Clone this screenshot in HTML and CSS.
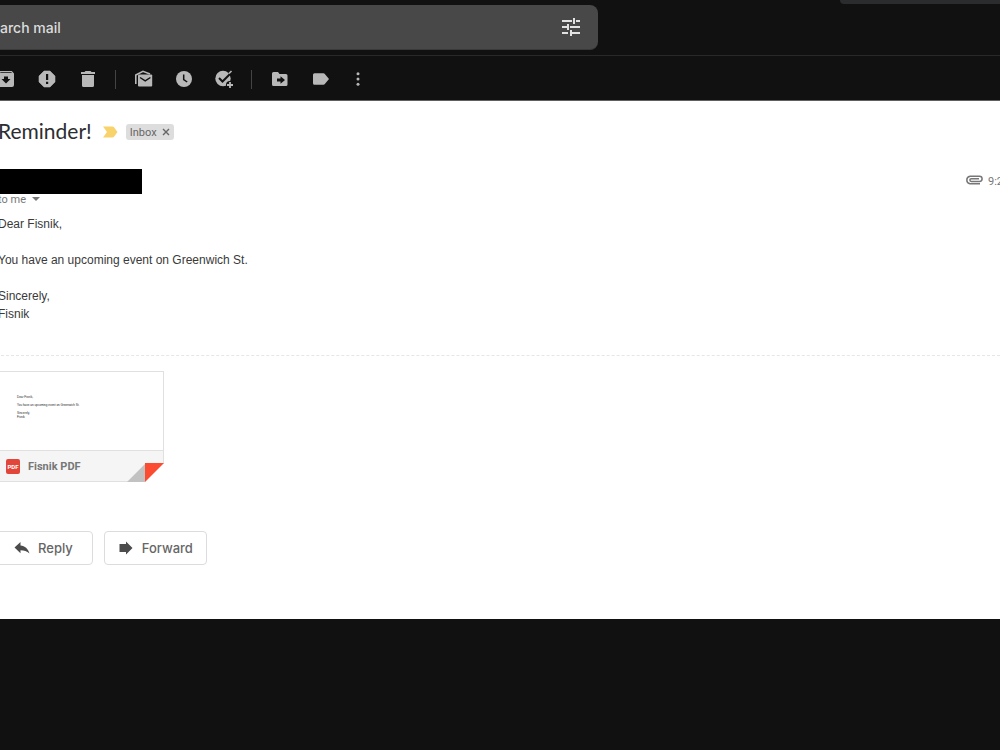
FILE: index.html
```html
<!DOCTYPE html>
<html lang="en">
<head>
<meta charset="utf-8">
<title>Reminder!</title>
<link rel="stylesheet" href="styles.css">
</head>
<body>
<div class="app">
  <header class="header">
    <form class="search">
      <input class="search-input" type="text" aria-label="Search mail" placeholder="arch mail">
      <button class="icon-button search-options" type="button" aria-label="Search options">
        <svg viewBox="0 0 20 20" fill="none" stroke="currentColor" stroke-width="2"><path d="M1 4h10M15 4h4M1 10h5M9 10h10M1 16h6M11 16h8M13 1v6M7 7v6M10 13v6"/></svg>
      </button>
    </form>
    <div class="panel-edge"></div>
  </header>

  <nav class="toolbar" aria-label="Message actions">
    <div class="group group-first">
      <button class="icon-button" type="button" aria-label="Archive"><svg viewBox="0 0 20 20"><path fill-rule="evenodd" d="M4.200 2h11.600l2.200 2.500V16a2 2 0 0 1-2 2H4a2 2 0 0 1-2-2V4.500zM4 4h12l-.7-.8H4.700zM8 7.500V10H5.500L10 14.500 14.500 10H12V7.500z"/></svg></button>
      <button class="icon-button" type="button" aria-label="Report spam"><svg viewBox="0 0 20 20"><path d="M7 2h6l5 5v6l-5 5H7l-5-5V7z" stroke="currentColor" stroke-width=".6" stroke-linejoin="round"/><path d="M9 5h2.200v6H9zM9 12.800h2.200V15H9z" fill="#111"/></svg></button>
      <button class="icon-button" type="button" aria-label="Delete"><svg viewBox="0 0 20 20"><path d="M7.500 2h5l1 1H17v2H3V3h3.500zM4 6h12v10.500a1.500 1.500 0 0 1-1.500 1.500h-9A1.500 1.500 0 0 1 4 16.500z"/></svg></button>
    </div>
    <span class="separator"></span>
    <div class="group">
      <button class="icon-button" type="button" aria-label="Mark as unread"><svg viewBox="0 0 20 20"><path d="M1.800 15V6L9 2.300 16 5" fill="none" stroke="currentColor" stroke-width="1.600"/><path d="M5 5.500h12.200a1 1 0 0 1 1 1v10a1 1 0 0 1-1 1H5a1 1 0 0 1-1-1v-10a1 1 0 0 1 1-1z"/><path d="M6 8.500l5.200 3.300 5.200-3.300" fill="none" stroke="#111" stroke-width="1.400"/></svg></button>
      <button class="icon-button" type="button" aria-label="Snooze"><svg viewBox="0 0 20 20"><circle cx="10" cy="10" r="8"/><path d="M9.700 5.500v5l3.500 2.500" fill="none" stroke="#111" stroke-width="1.500"/></svg></button>
      <button class="icon-button" type="button" aria-label="Add to tasks"><svg viewBox="0 0 20 20"><circle cx="9" cy="9.500" r="7.700"/><path d="M5 9l3.500 3.500L17.500 3.500" fill="none" stroke="#111" stroke-width="2"/><path d="M15 4.500l2.500-2.500" stroke="currentColor" stroke-width="1.600"/><circle cx="16" cy="16" r="4" fill="#111"/><path d="M16 13v6M13 16h6" stroke="currentColor" stroke-width="1.800"/></svg></button>
    </div>
    <span class="separator"></span>
    <div class="group">
      <button class="icon-button" type="button" aria-label="Move to"><svg viewBox="0 0 20 20"><path fill-rule="evenodd" d="M3.500 3H8l1.500 2h6.500a1.500 1.500 0 0 1 1.500 1.500v9a1.500 1.500 0 0 1-1.500 1.500H3.500A1.500 1.500 0 0 1 2 15.500v-11A1.500 1.500 0 0 1 3.500 3zM7 9.500v3h3.500v2.300L15 11l-4.500-3.800v2.300z"/></svg></button>
      <button class="icon-button" type="button" aria-label="Labels"><svg viewBox="0 0 20 20"><path d="M4.500 4.200h9c.6 0 1 .3 1.300.7L19 10l-4.200 5.100c-.3.400-.7.700-1.300.7h-9A1.500 1.500 0 0 1 3 14.300V5.700a1.500 1.500 0 0 1 1.500-1.500z"/></svg></button>
      <button class="icon-button icon-button-narrow" type="button" aria-label="More"><svg viewBox="0 0 16 20"><circle cx="8" cy="4.800" r="1.500"/><circle cx="8" cy="10" r="1.500"/><circle cx="8" cy="15.200" r="1.500"/></svg></button>
    </div>
  </nav>

  <main class="mail">
    <div class="subject-row">
      <h1 class="subject">Reminder!</h1>
      <svg class="important" viewBox="0 0 15 12"><path d="M0 .5h9.500a2 2 0 0 1 1.500.8L14.500 6 11 10.700a2 2 0 0 1-1.500.8H0L4 6z"/></svg>
      <span class="tag">Inbox <button class="tag-close" type="button" aria-label="Remove label"><svg viewBox="0 0 8 8"><path d="M1 1l6 6M7 1L1 7" stroke="currentColor" stroke-width="1.400"/></svg></button></span>
    </div>
    <div class="sender-row">
      <div class="sender"></div>
      <div class="meta">
        <svg class="clip" viewBox="0 0 18 14" fill="none" stroke="currentColor" stroke-width="1.500"><path d="M15 8.700H5A3.800 3.800 0 0 1 5 1.200h9.500a2.500 2.500 0 0 1 0 5.200H6.200a1.300 1.300 0 0 1 0-2.600H14"/></svg>
        <span>9:2</span>
      </div>
    </div>
    <button class="recipient" type="button">to me <span class="caret"></span></button>
    <div class="message">
      <p>Dear Fisnik,</p>
      <p>You have an upcoming event on Greenwich St.</p>
      <p>Sincerely,<br>Fisnik</p>
    </div>
    <hr class="divider">
    <a class="attachment" href="#">
      <span class="preview">
        <span>Dear Fisnik,</span>
        <span>You have an upcoming event on Greenwich St.</span>
        <span>Sincerely,<br>Fisnik</span>
      </span>
      <span class="file">
        <span class="pdf">PDF</span>
        <span class="file-name">Fisnik PDF</span>
      </span>
      <svg class="fold" viewBox="0 0 37 19"><path d="M37 0v19H18z" fill="#fff"/><path d="M0 19L18 1v18z" fill="#c2c2c2"/><path d="M18 0h19L18 19z" fill="#fb4b30"/></svg>
    </a>
    <div class="actions">
      <button class="action reply" type="button"><svg viewBox="0 0 16 14"><path d="M6.500 1v3.500C11 5 14 7.500 15.500 12.500 13 10 10 9.200 6.500 9.200v3L.5 6.500z"/></svg>Reply</button>
      <button class="action" type="button"><svg viewBox="0 0 16 14"><path d="M1.500 3H8V.500L14.500 7 8 13.500V11H1.500z"/></svg>Forward</button>
    </div>
  </main>
</div>
</body>
</html>
```
FILE: styles.css
```css
* { box-sizing: border-box; }

body {
  margin: 0;
  background: #111;
  color: #3c3c3c;
  font-family: Roboto, "Liberation Sans", sans-serif;
  overflow: hidden;
}

button { padding: 0; border: 0; background: none; color: inherit; font: inherit; }

.app { margin-left: -4px; }

.header {
  display: flex;
  justify-content: space-between;
  align-items: flex-start;
  padding-top: 5px;
  height: 56px;
  border-bottom: 1px solid #292929;
}

.search {
  display: flex;
  align-items: center;
  flex: 0 1 602px;
  height: 45px;
  padding: 0 17px 0 4px;
  border-radius: 0 8px 8px 0;
  background: #484848;
  border-bottom: 1px solid #3a3a3a;
}

.search-input {
  flex: 1;
  min-width: 0;
  padding: 0;
  border: 0;
  outline: 0;
  background: none;
  color: #ddd;
  font: 500 14px Inter, sans-serif;
}

.search-input::placeholder { color: #dcdcdc; opacity: 1; }
.search-options { color: #e2e2e2; }

.panel-edge {
  width: 160px;
  height: 4px;
  margin-top: -5px;
  border-radius: 0 0 0 4px;
  background: #2a2c2d;
}

.toolbar {
  display: flex;
  align-items: center;
  height: 45px;
  padding-top: 2px;
  border-bottom: 1px solid #606060;
  color: #b8b8b8;
}

.group { display: flex; gap: 20px; }
.group-first { gap: 21px; }
.icon-button { width: 20px; height: 20px; }
.icon-button-narrow { width: 16px; }
.icon-button svg { display: block; width: 100%; height: 100%; fill: currentColor; }
.search-options svg { fill: none; }
.separator { width: 1px; height: 19px; margin: 0 18px 0 17px; background: #444; }

.mail { padding: 20px 0 54px; background: #fff; }

.subject-row { display: flex; align-items: center; height: 22px; padding-left: 2px; }
.subject { margin: 0; padding-bottom: 2px; font: 400 21px/20px Lato, sans-serif; color: #2c2e30; }
.important { width: 15px; height: 12px; margin: 0 8px 0 11px; fill: #f8d26a; }

.tag {
  display: flex;
  align-items: center;
  gap: 5px;
  height: 16px;
  padding: 0 4px;
  border-radius: 3px;
  background: #ddd;
  color: #666;
  font-size: 11px;
}

.tag-close svg { display: block; width: 8px; height: 8px; }

.sender-row { display: flex; justify-content: space-between; margin-top: 26px; }
.sender { width: 146px; height: 25px; background: #000; }
.meta {
  display: flex;
  align-items: center;
  gap: 5px;
  height: 25px;
  margin-right: -3px;
  color: #777;
  font-size: 11px;
}
.clip { width: 18px; height: 14px; }

.recipient {
  display: flex;
  align-items: center;
  gap: 6px;
  height: 10px;
  padding-left: 2px;
  color: #777;
  font-size: 11px;
}
.caret { border: 4px solid transparent; border-top-color: #777; border-bottom: 0; }

.message {
  margin-top: 11px;
  padding-left: 2px;
  font: 12px/18px "Liberation Sans", Arial, sans-serif;
  color: #3a3a3a;
}
.message p { margin: 0 0 18px; }
.message p:last-child { margin: 0; }

.divider { margin: 32px 0 15px; border: 0; border-top: 1px dashed #e6e6e6; }

.attachment {
  position: relative;
  display: block;
  width: 168px;
  border: 1px solid #e0e0e0;
  color: #777;
  text-decoration: none;
}
.preview {
  display: flex;
  flex-direction: column;
  gap: 4px;
  height: 78px;
  padding: 23px 0 0 20px;
  color: #222;
  font: 3px/4px "Liberation Sans", Arial, sans-serif;
}
.file {
  display: flex;
  align-items: center;
  gap: 8px;
  height: 31px;
  padding-left: 9px;
  border-top: 1px solid #e0e0e0;
  background: #f5f5f5;
}
.pdf {
  width: 14px;
  border-radius: 2px;
  background: #e2453a;
  color: #fff;
  font: 700 6px/15px Roboto, sans-serif;
  text-align: center;
}
.file-name { font-size: 11px; font-weight: 700; }
.fold { position: absolute; right: -1px; bottom: -1px; width: 37px; height: 19px; }

.actions { display: flex; gap: 11px; margin-top: 49px; }
.action {
  display: flex;
  align-items: center;
  gap: 8px;
  height: 34px;
  padding: 0 13px;
  border: 1px solid #dadce0;
  border-radius: 4px;
  color: #666;
  font: 500 13px Inter, sans-serif;
}
.reply { padding: 0 19px 0 17px; }
.action svg { width: 16px; height: 14px; fill: #4c4c4c; }
```
